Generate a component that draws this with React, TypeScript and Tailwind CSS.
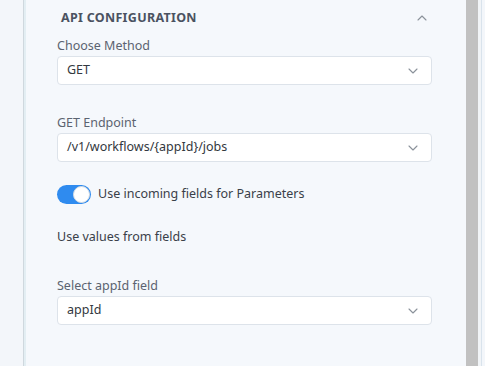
import React from "react";

function Chevron({ up = false }: { up?: boolean }) {
  return (
    <svg width="10" height="6" viewBox="0 0 10 6" fill="none" className={up ? "rotate-180" : ""}>
      <path d="M1 1 L5 5 L9 1" stroke="#8b929b" strokeWidth="1.1" strokeLinecap="round" strokeLinejoin="round" />
    </svg>
  );
}

function Select({ value }: { value: string }) {
  return (
    <div className="flex h-[29px] items-center justify-between rounded-[4px] border border-[#dde3ea] bg-white pl-[9px] pr-[13px]">
      <span className="text-[12.5px] text-[#333840]">{value}</span>
      <Chevron />
    </div>
  );
}

export default function App() {
  return (
    <div
      className="flex h-[366px] w-[485px] overflow-hidden bg-[#f4f7fb]"
      style={{ fontFamily: '"Noto Sans", "Open Sans", sans-serif' }}
    >
      <div className="w-[23px] shrink-0 bg-[#f3f6fa]" />
      <div className="w-px shrink-0 bg-[#cfd8de]" />
      <div className="w-[2px] shrink-0 bg-[#e3eef3]" />
      <div className="flex min-w-0 flex-1 flex-col bg-[#f5f8fc] pl-[31px] pr-[34px]">
        <div className="flex h-[36px] items-center justify-between pl-[4px] pr-[5px]">
          <span className="text-[12.5px] font-bold tracking-[0.3px] text-[#4a5261]">API CONFIGURATION</span>
          <Chevron up />
        </div>
        <div className="flex h-[20px] items-center text-[12.5px] text-[#5b6370]">Choose Method</div>
        <Select value="GET" />
        <div className="mt-[28px] flex h-[20px] items-center text-[12.5px] text-[#5b6370]">GET Endpoint</div>
        <Select value="/v1/workflows/{appId}/jobs" />
        <div className="mt-[23px] flex items-center gap-[7px]">
          <div className="flex h-[19px] w-[34px] items-center justify-end rounded-full bg-[#2f8bef] pr-[1px]">
            <div className="h-[17px] w-[17px] rounded-full border border-[#d7dde3] bg-white" />
          </div>
          <span className="text-[12.5px] text-[#3a4049]">Use incoming fields for Parameters</span>
        </div>
        <div className="mt-[23px] flex h-[20px] items-center text-[12.5px] text-[#3a4049]">Use values from fields</div>
        <div className="mt-[29px] flex h-[20px] items-center text-[12.5px] text-[#5b6370]">Select appId field</div>
        <Select value="appId" />
      </div>
      <div className="w-[12px] shrink-0 bg-[#c1c1c1]" />
      <div className="w-[3px] shrink-0 bg-[#f1f4f7]" />
      <div className="w-px shrink-0 bg-[#d9e3ec]" />
      <div className="w-[3px] shrink-0 bg-[#f3f6fa]" />
    </div>
  );
}
